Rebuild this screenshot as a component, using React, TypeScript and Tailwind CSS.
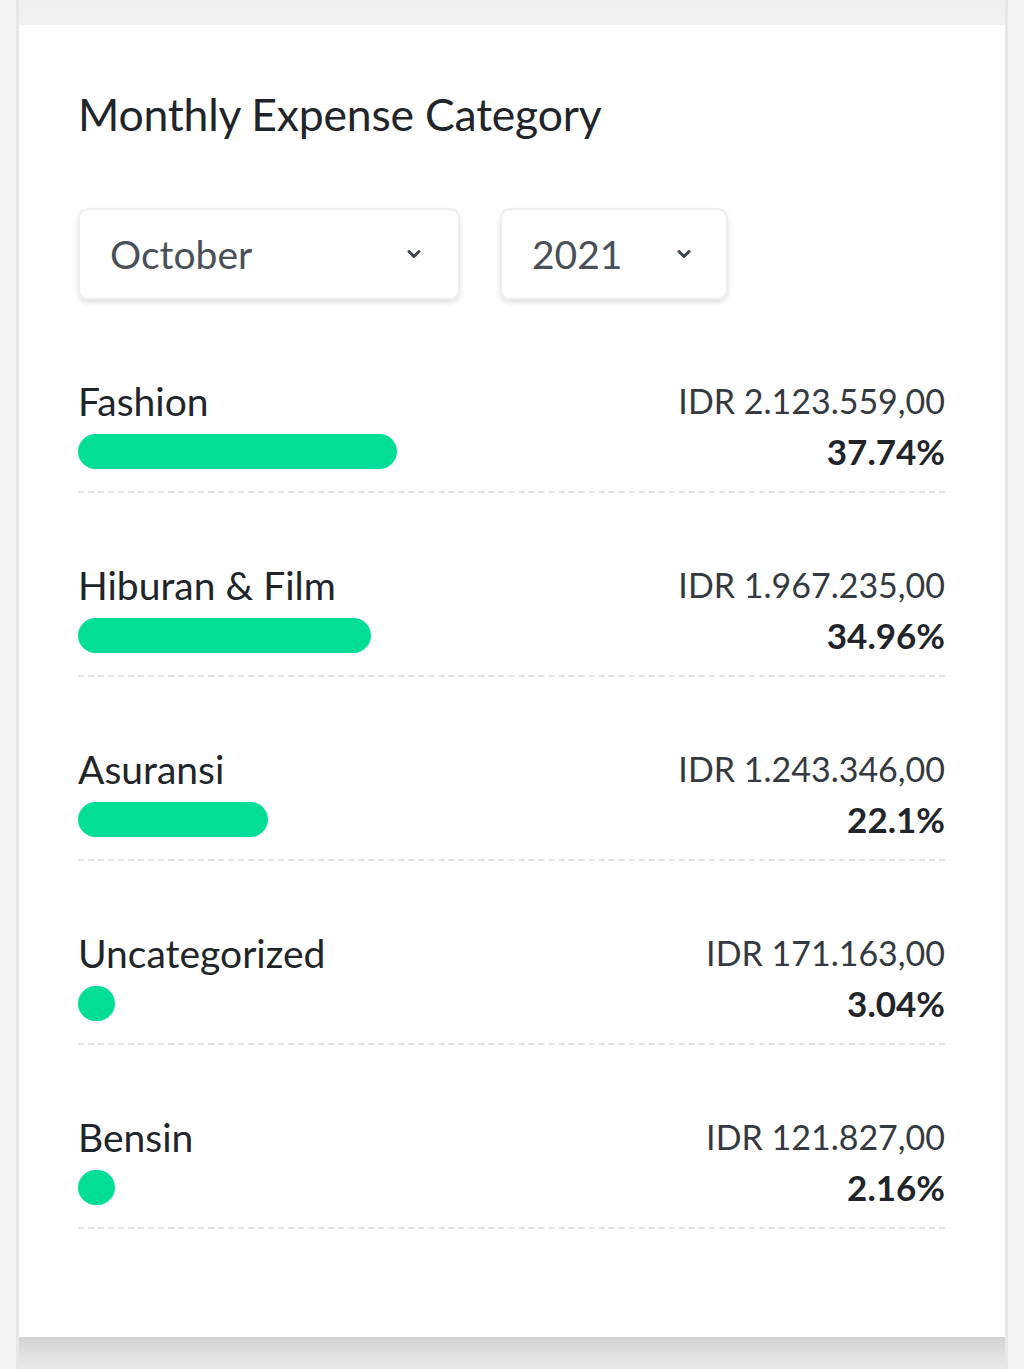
import React from "react";

const rows = [
  { name: "Fashion", amount: "IDR 2.123.559,00", pct: "37.74%", w: 319 },
  { name: "Hiburan & Film", amount: "IDR 1.967.235,00", pct: "34.96%", w: 293 },
  { name: "Asuransi", amount: "IDR 1.243.346,00", pct: "22.1%", w: 190 },
  { name: "Uncategorized", amount: "IDR 171.163,00", pct: "3.04%", w: 37 },
  { name: "Bensin", amount: "IDR 121.827,00", pct: "2.16%", w: 37 },
];

function Chevron() {
  return (
    <svg width="16" height="12" viewBox="0 0 16 12" fill="none">
      <path d="M3 3.5 L8 8.5 L13 3.5" stroke="#3f4650" strokeWidth="3" strokeLinecap="round" strokeLinejoin="round" />
    </svg>
  );
}

export default function App() {
  return (
    <div className="min-h-[1369px] w-[1024px] bg-[#f2f3f4] flex" style={{ fontFamily: "Lato, 'Noto Sans', sans-serif" }}>
      <div className="ml-[16px] w-[992px] border-x-[3px] border-[#e6e7e9] flex flex-col">
        <div className="h-[25px] bg-gradient-to-b from-[#eceef0] to-[#f1f2f4]" />
        <div className="bg-white h-[1312px] pl-[59px] pr-[60px] pt-[61px]">
          <h2 className="text-[44.5px] leading-[56px] text-[#212529] tracking-[-0.2px]">Monthly Expense Category</h2>
          <div className="flex gap-[40px] mt-[66px]">
            <div className="w-[382px] h-[92px] rounded-[10px] border-2 border-[#eceef0] shadow-[0_3px_5px_rgba(0,0,0,0.12)] flex items-center justify-between pl-[30px] pr-[36px]">
              <span className="text-[39px] text-[#495057]">October</span>
              <Chevron />
            </div>
            <div className="w-[228px] h-[92px] rounded-[10px] border-2 border-[#eceef0] shadow-[0_3px_5px_rgba(0,0,0,0.12)] flex items-center justify-between pl-[30px] pr-[34px]">
              <span className="text-[39px] text-[#495057]">2021</span>
              <Chevron />
            </div>
          </div>
          <div className="mt-[78px] flex flex-col gap-[69px]">
            {rows.map((r) => (
              <div key={r.name} className="border-b-2 border-dashed border-[#dfe1e5] pb-[17px] flex justify-between">
                <div className="flex flex-col">
                  <span className="text-[39px] leading-[46px] text-[#212529]">{r.name}</span>
                  <div className="mt-[10px] h-[35px] rounded-full bg-[#02dd98]" style={{ width: r.w }} />
                </div>
                <div className="flex flex-col items-end">
                  <span className="text-[34px] leading-[46px] text-[#343a40]">{r.amount}</span>
                  <span className="mt-[4px] text-[35px] leading-[46px] font-bold text-[#212529]">{r.pct}</span>
                </div>
              </div>
            ))}
          </div>
        </div>
        <div className="flex-1 bg-gradient-to-b from-[#d3d4d7] to-[#e9eaec]" />
      </div>
    </div>
  );
}
